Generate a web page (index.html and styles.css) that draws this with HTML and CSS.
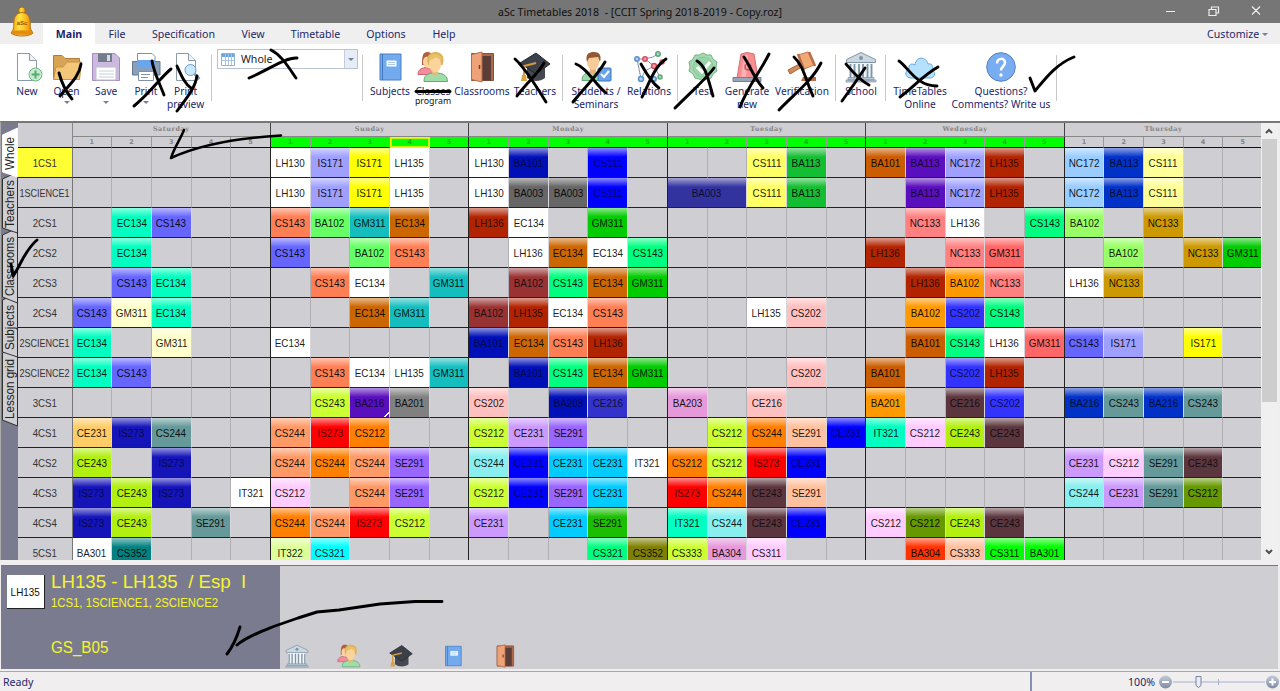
FILE: index.html
```html
<!DOCTYPE html>
<html lang="en">
<head>
<meta charset="utf-8">
<title>aSc Timetables 2018</title>
<link rel="stylesheet" href="styles.css">
</head>
<body>
<svg class="defs" width="0" height="0">
  <defs>
  <linearGradient id="gold" x1="0" x2="1"><stop offset="0" stop-color="#f39a06"/><stop offset=".4" stop-color="#ffe548"/><stop offset=".75" stop-color="#f9ab10"/><stop offset="1" stop-color="#c96d08"/></linearGradient>
  <linearGradient id="ball" x1="0" y1="0" x2="0" y2="1"><stop offset="0" stop-color="#c4cad8"/><stop offset="1" stop-color="#7e8ba5"/></linearGradient>
  </defs>
  <symbol id="new" viewBox="0 0 32 32"><path d="M6.500 2.500H18.500L25.500 9.500V29.500H6.500Z" fill="#fff" stroke="#8b9aa8"/><path d="M18.500 2.500V9.500H25.500" fill="#eef2f5" stroke="#8b9aa8"/><circle cx="24.500" cy="23.500" r="6.500" fill="#c8eccf" stroke="#6fb583"/><path d="M24.500 19.500v8M20.500 23.500h8" stroke="#58a870" stroke-width="2"/></symbol>
  <symbol id="open" viewBox="0 0 32 32"><path d="M2.500 28V4.500H11l3 3H28.500V28Z" fill="#d9a355" stroke="#b07c39"/><path d="M2.500 28.500L5 16h7l4-5h14.500L28.500 28.500Z" fill="#f3c67a" stroke="#c99349"/></symbol>
  <symbol id="save" viewBox="0 0 32 32"><path d="M2.500 2.500H25L29.500 7V29.500H2.500Z" fill="#cdb9e0" stroke="#a48cbd"/><path d="M8 2.500H22V11H8Z" fill="#727c8d"/><path d="M17 4h3v6h-3Z" fill="#d8dde5"/><path d="M6 16h20v13H6Z" fill="#fff" stroke="#b8c0cc"/><path d="M9 20h15M9 23h15M9 26h15" stroke="#c5d0da"/></symbol>
  <symbol id="print" viewBox="0 0 32 32"><path d="M7.500 12V2.500H22L25 5.500V12" fill="#fff" stroke="#8292a5"/><path d="M2.500 10.500H30V24H2.500Z" fill="#8aa0b8" stroke="#607890"/><path d="M7 9h18v8H7Z" fill="#69a6ee"/><path d="M8.500 20.500h15v9h-15Z" fill="#fff" stroke="#8292a5"/><path d="M11 23.500h9M11 26.500h7" stroke="#8292a5"/></symbol>
  <symbol id="preview" viewBox="0 0 32 32"><path d="M6.500 2.500H18.500L25.500 9.500V29.500H6.500Z" fill="#fff" stroke="#8b9aa8"/><path d="M18.500 2.500V9.500H25.500" fill="#eef2f5" stroke="#8b9aa8"/><circle cx="20.500" cy="19" r="5.500" fill="#c9e8fc" stroke="#6a9dcc"/><path d="M24.500 23l5 5" stroke="#8499ad" stroke-width="2.500"/></symbol>
  <symbol id="book" viewBox="0 0 32 32"><path d="M6 3H27V29H6Z" fill="#73a9ed" stroke="#4a7ec8"/><path d="M8.500 3V29" stroke="#3e76c0"/><path d="M12.500 9.500h10v6h-10Z" fill="#fff"/><path d="M14 11.500h7M14 13.500h7" stroke="#a9c8ee"/></symbol>
  <symbol id="people" viewBox="0 0 32 32"><path d="M1 23.500c0-5 3-6 7-7 5 1 8 2 8 7Z" fill="#f58d96" stroke="#cc6670"/><path d="M5 14C5 4 6 1 10.500 1S17 4 17 14Z" fill="#b45d3d"/><ellipse cx="10" cy="11" rx="4" ry="5.500" fill="#fad39f"/><path d="M7 30.500c0-6 3-7.500 8-8.500h6c6 1 9.500 3 9.500 8.500Z" fill="#a0dda8" stroke="#61aa73"/><path d="M15 19h6v4l-3 2-3-2Z" fill="#e8b878"/><path d="M11 14C8 4 14 1 18 1s11 2 7.500 13Z" fill="#dfb25a"/><ellipse cx="18" cy="13" rx="6" ry="8.500" fill="#fbd49c"/><path d="M12 9C12 4 15 3 18 3s7 2 7 6c-4-1-5-2-6-3-2 2-4 3-7 3Z" fill="#e8c068"/></symbol>
  <symbol id="door" viewBox="0 0 32 32"><path d="M5.500 2.500H27.500V29.500H5.500Z" fill="#aa6849" stroke="#8b5138"/><path d="M15 5H25V29.500H15Z" fill="#5b3c37"/><path d="M5.500 3.500L16 1V31L5.500 28.500Z" fill="#eea277" stroke="#b36d4d"/><path d="M13.500 14v4" stroke="#713f2e" stroke-width="1.500"/></symbol>
  <symbol id="cap" viewBox="0 0 32 32"><path d="M8 13V27c5 4 13 4 18 0V13Z" fill="#444951"/><path d="M1 12L17 2L31 13L17 23Z" fill="#3c4149" stroke="#25292e"/><path d="M17 12L5 15V27" fill="none" stroke="#d39b3b" stroke-width="2"/><path d="M3 24h4l1 6H2Z" fill="#d9a242"/></symbol>
  <symbol id="student" viewBox="0 0 32 32"><path d="M2 29.500c0-6 4-8 10-9 8 1 11 3 11 9Z" fill="#9cdbab" stroke="#65a878"/><path d="M10 17h6v5l-3 2-3-2Z" fill="#e5b077"/><ellipse cx="13" cy="11" rx="6" ry="8" fill="#f8cb96"/><path d="M7 11C5 3 9 1 14 1s8 3 6 10L18 6l-9 1Z" fill="#935831"/><rect x="18" y="17" width="13" height="13" rx="1" fill="#69a4ea" stroke="#3d77bd"/><path d="M21 23l3 3 5-6" stroke="#fff" stroke-width="2" fill="none"/></symbol>
  <symbol id="relations" viewBox="0 0 32 32"><path d="M4 8L12 8L20 6L25 3M12 8L21 15L29 13M8 28L12 20L21 15L27 26M4 8L8 28" stroke="#8795a5" fill="none"/><g stroke-width="1.500"><g fill="#a9d0ff" stroke="#5a90cc"><circle cx="4" cy="8" r="2.200"/><circle cx="8" cy="28" r="2.500"/><circle cx="21" cy="28" r="2.200"/></g><g fill="#f69ba4" stroke="#d64d60"><circle cx="12" cy="8" r="2.200"/><circle cx="21" cy="15" r="2.500"/><circle cx="29" cy="11" r="2"/></g><g fill="#a4ddb4" stroke="#5da579"><circle cx="25" cy="3" r="2.200"/><circle cx="27" cy="26" r="2"/></g></g></symbol>
  <symbol id="test" viewBox="0 0 32 32"><path d="M16 2l4 2 4 0 2 4 4 3-1 5 1 4-4 3-2 4-4 1-4 2-4-2-4-1-2-4-4-3 1-4-1-5 4-3 2-4 4 0Z" fill="#a6d9af" stroke="#72b387"/><circle cx="16" cy="16" r="10" fill="#9bd4a8" stroke="#8ac998"/><path d="M10 16l5 5 8-10" fill="none" stroke="#fff" stroke-width="3"/></symbol>
  <symbol id="siren" viewBox="0 0 32 32"><path d="M6 27L10 3Q16 0 23 3L27 27Z" fill="#f78f92" stroke="#d86e76"/><path d="M10 26L13 4h4l-2 22Z" fill="#fbb1b1"/><circle cx="17" cy="16" r="3" fill="none" stroke="#c95560" stroke-width="1.500"/><path d="M2 26.500h28v4H2Z" fill="#98a6b5" stroke="#718095"/></symbol>
  <symbol id="gavel" viewBox="0 0 32 32"><path d="M2 19L17 11l2 3L4 23Z" fill="#d18b58" stroke="#a76642"/><path d="M12 4L22 1l6 13-10 4Z" fill="#f0aa75" stroke="#c57549"/><path d="M12 3l6 16M23 1l6 14" stroke="#b96f47" stroke-width="2.500"/><path d="M17 26h13v4H15Z" fill="#b76f4b"/></symbol>
  <symbol id="school" viewBox="0 0 32 32"><path d="M1.500 8.500L16 1.500l14.500 7v3h-29Z" fill="#cbd8e2" stroke="#8294a5"/><circle cx="16" cy="7" r="2" fill="#8294a5"/><path d="M4 12h24v14H4Z" fill="#eff7fb"/><path d="M5.500 13v14M9.500 13v14M14 13v14M18 13v14M22.500 13v14M26.500 13v14" stroke="#8293a4" stroke-width="1.800"/><path d="M3 26.500h26v2.500H3ZM1 29h30v2H1Z" fill="#b8c7d4" stroke="#8293a4" stroke-width=".7"/></symbol>
  <symbol id="cloud" viewBox="0 0 32 32"><path d="M7 27C1 27 0 20 5 18 4 13 8 12 11 14 12 5 22 5 24 13c4-1 6 3 4 6 5 3 2 8-2 8Z" fill="#b5e1fd" stroke="#66a9df"/></symbol>
  <symbol id="question" viewBox="0 0 32 32"><circle cx="16" cy="16" r="14.300" fill="#79adf2" stroke="#527fc0"/><path d="M12 12.500c0-6 8-6 8-1 0 4-4 4-4 8" fill="none" stroke="#fff" stroke-width="2.500"/><circle cx="16" cy="24" r="1.700" fill="#fff"/></symbol>
</svg>

<div class="window">
  <header class="titlebar">
    <span class="title">aSc Timetables 2018&nbsp; - [CCIT Spring 2018-2019 - Copy.roz]</span>
    <svg class="window-buttons" width="110" height="20" viewBox="0 0 110 20"><path d="M6 11.500h9M49 9.500h7v6h-7ZM51.500 9.500v-2.500h7v6H56M92 6.500l8 8M100 6.500l-8 8" fill="none" stroke="#eee" stroke-width="1.200"/></svg>
  </header>

  <nav class="tabs">
    <span class="tab tab-main">Main</span><span class="tab tab-file">File</span><span class="tab tab-spec">Specification</span><span class="tab tab-view">View</span><span class="tab tab-time">Timetable</span><span class="tab tab-opt">Options</span><span class="tab tab-help">Help</span>
    <span class="customize">Customize <i class="caret"></i></span>
  </nav>
  <svg class="bell" width="28" height="32" viewBox="0 0 28 32"><circle cx="14" cy="5.500" r="3.500" fill="url(#gold)" stroke="#a66b14"/><path d="M5 25C7 20 3 9 14 7.500c11 1.500 7 12.500 9 17.500l2 3c-4 4-18 4-22 0Z" fill="url(#gold)" stroke="#b67512"/><ellipse cx="14" cy="27.500" rx="10.500" ry="2.300" fill="#e58a12"/><text x="14" y="20" text-anchor="middle">aSc</text></svg>

  <section class="ribbon">
    <div class="group g-file">
      <div class="btn"><svg><use href="#new"/></svg><b>New</b></div>
      <div class="btn"><svg><use href="#open"/></svg><b>Open</b><i class="caret"></i></div>
      <div class="btn"><svg><use href="#save"/></svg><b>Save</b><i class="caret"></i></div>
      <div class="btn"><svg><use href="#print"/></svg><b>Print</b><i class="caret"></i></div>
      <div class="btn"><svg><use href="#preview"/></svg><b>Print<br>preview</b></div>
    </div>
    <div class="group g-view">
      <div class="combo"><svg width="14" height="14" viewBox="0 0 14 14"><path d="M.5 1.500h13v12H.5Z" fill="#fff" stroke="#8fb3d8"/><path d="M1 2h12v3H1Z" fill="#69a4e0"/><path d="M4.500 2v11M7.500 2v11M10.500 2v11M1 8.500h12" stroke="#a9c4de"/></svg><span>Whole</span><em><i class="caret"></i></em></div>
    </div>
    <div class="group g-data">
      <div class="btn w44"><svg><use href="#book"/></svg><b>Subjects</b></div>
      <div class="btn w42"><svg><use href="#people"/></svg><b>Classes</b><small>program</small></div>
      <div class="btn w56"><svg><use href="#door"/></svg><b>Classrooms</b></div>
      <div class="btn w50"><svg><use href="#cap"/></svg><b>Teachers</b></div>
    </div>
    <div class="group g-rel">
      <div class="btn w56"><svg><use href="#student"/></svg><b>Students /<br>Seminars</b></div>
      <div class="btn w50"><svg><use href="#relations"/></svg><b>Relations</b></div>
    </div>
    <div class="group g-gen">
      <div class="btn w38"><svg><use href="#test"/></svg><b>Test</b></div>
      <div class="btn w50"><svg><use href="#siren"/></svg><b>Generate<br>new</b></div>
      <div class="btn w60"><svg><use href="#gavel"/></svg><b>Verification</b></div>
    </div>
    <div class="group g-school"><div class="btn w50"><svg><use href="#school"/></svg><b>School</b></div></div>
    <div class="group g-web">
      <div class="btn w64"><svg><use href="#cloud"/></svg><b>TimeTables<br>Online</b></div>
      <div class="btn w100"><svg><use href="#question"/></svg><b>Questions?<br>Comments? Write us</b></div>
    </div>
  </section>

  <main class="workspace">
    <svg class="side-tabs" width="17" height="437" viewBox="0 0 17 437">
      <g fill="#cfced3" stroke="#222" stroke-width=".9">
        <path d="M16.500 223L1.500 230V297L16.500 303Z"/>
        <path d="M16.500 170L1.500 177V229L16.500 234Z"/>
        <path d="M16.500 105L1.500 112V174L16.500 180Z"/>
        <path d="M16.500 49L1.500 56V105L16.500 110Z"/>
        <path d="M16.500 5L1.500 12V49L16.500 54Z" fill="#fff" stroke="#fff"/>
      </g>
      <g font-family="Liberation Sans" font-size="12.500" fill="#222">
        <text transform="translate(13 47) rotate(-90)" textLength="33" lengthAdjust="spacingAndGlyphs">Whole</text>
        <text transform="translate(13 105) rotate(-90)" textLength="48" lengthAdjust="spacingAndGlyphs">Teachers</text>
        <text transform="translate(13 173) rotate(-90)" textLength="59" lengthAdjust="spacingAndGlyphs">Classrooms</text>
        <text transform="translate(13 227) rotate(-90)" textLength="45" lengthAdjust="spacingAndGlyphs">Subjects</text>
        <text transform="translate(13 296) rotate(-90)" textLength="60" lengthAdjust="spacingAndGlyphs">Lesson grid</text>
      </g>
    </svg>
    <div class="board" id="board"></div>
    <div class="scrollbar">
      <svg width="14" height="16" viewBox="0 0 14 16"><path d="M4 10l3-3 3 3" fill="none" stroke="#505050" stroke-width="2"/></svg>
      <div class="thumb"></div>
      <svg width="14" height="16" viewBox="0 0 14 16"><path d="M4 6l3 3 3-3" fill="none" stroke="#505050" stroke-width="2"/></svg>
    </div>
  </main>

  <section class="details">
    <div class="card">
      <div class="chip"><span>LH135</span></div>
      <div class="info"><span class="name">LH135 - LH135&nbsp; / Esp&nbsp; I</span><span class="classes">1CS1, 1SCIENCE1, 2SCIENCE2</span><span class="room">GS_B05</span></div>
    </div>
    <div class="tools"><svg><use href="#school"/></svg><svg><use href="#people"/></svg><svg><use href="#cap"/></svg><svg><use href="#book"/></svg><svg><use href="#door"/></svg></div>
  </section>

  <footer class="status">
    <span class="ready">Ready</span>
    <div class="zoom"><span>100%</span>
      <svg width="122" height="18" viewBox="0 0 122 18"><path d="M15 9h92M60.500 6v6" stroke="#a8b0cb"/><circle cx="7.500" cy="9" r="6.500" fill="url(#ball)"/><path d="M4 9h7" stroke="#fff" stroke-width="2"/><path d="M38 3.500h5v9l-2.500 2-2.500-2Z" fill="#e9ecf4" stroke="#7784a5"/><circle cx="114.500" cy="9" r="6.500" fill="url(#ball)"/><path d="M111 9h7M114.500 5.500v7" stroke="#fff" stroke-width="2"/></svg>
    </div>
  </footer>

  <svg class="ink" width="1280" height="691" viewBox="0 0 1280 691" fill="none" stroke="#000" stroke-width="2.900" stroke-linecap="round" stroke-linejoin="round">
    <path d="M59 73C62 84 66 92 72 99M81 64C79 77 70 84 60 96"/>
    <path d="M152 61C154 73 160 84 164 95M171 69C161 77 150 93 134 106"/>
    <path d="M177 66C182 77 185 84 191 88M197 76C195 89 185 100 177 111"/>
    <path d="M271 50C281 55 287 65 296 78M297 58C286 57 270 69 249 78"/>
    <path d="M416 91.500H450"/>
    <path d="M515 59C525 68 535 84 546 102M544 63C538 74 527 82 517 96"/>
    <path d="M576 64C587 68 594 83 606 93M605 62C597 76 586 86 573 102"/>
    <path d="M641 64C646 73 652 83 659 88M666 59C654 67 650 82 642 97"/>
    <path d="M697 61C706 66 708 79 713 96M714 68C706 79 695 88 675 108"/>
    <path d="M744 57C750 66 754 78 763 88M769 54C760 72 748 86 740 107"/>
    <path d="M794 57C804 66 806 82 813 96M821 63C812 81 794 94 779 110"/>
    <path d="M846 64C851 70 859 80 869 85M865 68C857 80 850 90 842 101"/>
    <path d="M899 61C908 67 916 86 937 86M938 67C922 76 914 87 900 97"/>
    <path d="M1030 78L1035 91C1045 79 1056 64 1074 57"/>
    <path d="M184 130C180 140 174 148 171 158C199 145 239 138 281 135.500" stroke-width="2.500"/>
    <path d="M11 264L13 276C20 267 24 251 37 240"/>
    <path d="M240 627C237 637 234 645 227 654M237 645C246 637 260 632 275 626L298 618L317 612L339 610L380 604L415 601.500H442"/>
  </svg>
</div>
<script src="board.js"></script>
</body>
</html>
```
FILE: styles.css
```css
* { box-sizing: border-box; }
body { margin: 0; overflow: hidden; font-family: "Noto Sans", "Open Sans", sans-serif; font-size: 11px; color: #23266b; }
.defs { position: absolute; }
.window { position: relative; display: flex; flex-direction: column; width: 1280px; height: 691px; background: #f0eeee; }
.titlebar { display: flex; height: 23px; flex: none; align-items: center; justify-content: center; background: #767676; color: #111; position: relative; }
.title { font-size: 10.6px; white-space: nowrap; }
.window-buttons { position: absolute; right: 10px; top: 0; }
.tabs { display: flex; height: 21px; flex: none; padding-left: 43px; background: #efefef; line-height: 23px; font-size: 10.6px; }
.tab { text-align: center; white-space: nowrap; }
.tab-main { width: 52px; background: #fff; font-weight: bold; }
.tab-file { width: 44px; }
.tab-spec { width: 89px; }
.tab-view { width: 50px; }
.tab-time { width: 75px; }
.tab-opt { width: 66px; }
.tab-help { width: 50px; }
.customize { margin-left: auto; padding-right: 12px; }
.caret { display: inline-block; width: 0; height: 0; border: 3px solid transparent; border-top-color: #718299; border-bottom: 0; vertical-align: 2px; }
.bell { position: absolute; left: 8px; top: 5px; }
.bell text { font: bold 6px "Liberation Sans", sans-serif; fill: #8a5108; }
.ribbon { display: flex; height: 77px; flex: none; background: #fff; padding-top: 7px; }
.group { display: flex; flex: none; height: 70px; background: linear-gradient(#c9c9c9, #c9c9c9) right 4px / 1px 46px no-repeat; }
.btn { display: flex; flex: none; flex-direction: column; align-items: center; width: 39.7px; white-space: nowrap; font-size: 10.2px; }
.btn > svg { width: 32px; height: 32px; margin-bottom: 2px; flex: none; }
.btn b { font-weight: normal; line-height: 12.5px; text-align: center; display: block; }
.btn .caret { margin-top: 3px; }
.btn small { display: block; font-size: 8.8px; line-height: 7px; color: #111; }
.g-file { width: 212px; padding-left: 7px; }
.g-view { width: 151px; padding-left: 5px; }
.g-data { width: 200px; padding-left: 5px; }
.g-rel { width: 115px; padding-left: 5px; }
.g-gen { width: 158px; padding-left: 6px; }
.g-school { width: 50px; }
.g-web { width: 171px; padding-left: 2px; }
.w38 { width: 38px; }
.w42 { width: 42px; }
.w44 { width: 44px; }
.w50 { width: 50px; }
.w56 { width: 56px; }
.w60 { width: 60px; }
.w64 { width: 64px; }
.w100 { width: 98px; }
.combo { display: flex; align-items: center; width: 141px; height: 20px; margin-top: -2px; padding-left: 3px; border: 1px solid #b9c2d3; background: #fff; color: #222; }
.combo span { margin-left: 6px; font-size: 10.6px; }
.combo em { display: flex; align-items: center; justify-content: center; margin-left: auto; width: 13px; height: 18px; background: #e7edf6; border-left: 1px solid #c4cddd; }
.workspace { display: flex; height: 439px; flex: none; border-top: 2px solid #777; border-left: 1px solid #aaa; padding-right: 2px; }
.side-tabs { flex: none; background: #7b7b90; }
.board { width: 1243px; flex: none; overflow: hidden; background: #cfced3; font-family: "Liberation Sans", Arial, sans-serif; font-size: 11px; color: #111; display: grid; grid-template-columns: 54.5px repeat(30, 39.7px); grid-template-rows: 14px 11px; grid-auto-rows: 30px; }
.corner { grid-row: span 2; border-bottom: 1px solid #111; border-right: 1px solid #888; }
.day { grid-column: span 5; border-right: 1.5px solid #444; border-bottom: 1px solid #888; font: bold 6.5px/13px "DejaVu Serif", serif; letter-spacing: .5px; text-align: center; color: #858585; }
.hour { border-right: 1px solid #999; border-bottom: 1px solid #111; font: bold 6.5px/11px "DejaVu Sans", sans-serif; text-align: center; color: #858585; }
.hour.on { background: #00ff00; color: #13b513; }
.hour.active { border: 1px solid #fff200; box-shadow: inset 0 0 0 1px #ccee00; line-height: 8px; }
.cell, .label { display: flex; align-items: center; justify-content: center; border-bottom: 1.5px solid #222; border-right: 1px solid #b0afb5; overflow: hidden; white-space: nowrap; }
.label { border-right-color: #777; color: #333; }
.label.selected { background: #ffff33; }
.cell span, .chip span { transform: scaleX(.9); flex: none; }
.label span { transform: scaleX(.88); flex: none; }
.label.long span { transform: scaleX(.82); }
.cell.filled { background-image: linear-gradient(rgba(255,255,255,.55), rgba(255,255,255,0) 9px); border-right-color: #d6d6dc; }
.cell.double { grid-column: span 2; }
.cell.day-end, .hour.day-end { border-right: 1.5px solid #222; }
.cell.folded { background-image: linear-gradient(135deg, transparent 92%, #fff 92%, #fff 95%, transparent 95%), linear-gradient(rgba(255,255,255,.55), rgba(255,255,255,0) 9px); }
.scrollbar { display: flex; flex-direction: column; width: 17px; background: #f0f0f0; padding-left: 1px; }
.thumb { width: 15px; height: 263px; margin-bottom: auto; background: #cdcdcd; }
.details { display: flex; flex: none; height: 104px; margin: 5px 2px 0 1px; border-top: 1px solid #777; background: #cfced3; }
.card { display: flex; width: 279px; background: #7b7b90; font-family: "Liberation Sans", Arial, sans-serif; color: #f5f52d; }
.chip { display: flex; align-items: center; justify-content: center; width: 38px; height: 34px; margin: 9px 0 0 6px; background: #fff; border-right: 1px solid #222; border-bottom: 1px solid #222; font-size: 11px; color: #111; }
.info { display: flex; flex-direction: column; margin-left: 6px; white-space: nowrap; }
.info span { transform-origin: left; }
.name { font-size: 18.7px; line-height: 20px; margin-top: 6px; }
.classes { font-size: 12px; line-height: 14px; margin-top: 4px; transform: scaleX(.945); }
.room { font-size: 15.8px; line-height: 18px; margin-top: 29px; transform: scaleX(.96); }
.tools { display: flex; gap: 28px; align-items: flex-end; padding: 0 0 1px 5px; }
.tools svg { width: 24px; height: 24px; }
.status { display: flex; flex: 1; align-items: center; justify-content: space-between; margin-top: 2px; border-top: 1px solid #a2a8bb; padding: 0 0 0 3px; font-size: 10.6px; }
.zoom { display: flex; align-items: center; height: 100%; width: 250px; border-left: 2px solid #8490af; justify-content: flex-end; }
.zoom span { margin-right: 3px; }
.ink { position: absolute; left: 0; top: 0; pointer-events: none; }
```
FILE: board.js
```js
const palette = {
  w: '#ffffff', V: '#9f9fff', Y: '#ffff00', n: '#0010b8', b: '#0000ff', y: '#ffff66',
  g: '#14be32', o: '#cc5c00', p: '#5a0fbe', r: '#b22400', L: '#99ccff', B: '#0032c8',
  Q: '#ffff99', G: '#666666', i: '#3333a0', t: '#00ffc0', c: '#6666ff', s: '#ff7f55',
  m: '#66ff66', T: '#14bebe', O: '#cc6600', e: '#00cc00', k: '#ff8080', S: '#00ff80',
  M: '#99ff66', d: '#cc9900', R: '#ff6666', N: '#993333', x: '#ffffcc', a: '#ff9900',
  u: '#3333ff', f: '#ffc0c0', l: '#ccff33', h: '#808080', U: '#3333cc', P: '#e699d9',
  D: '#5c363e', E: '#669999', C: '#ffcc66', I: '#1414b9', A: '#ff9966', F: '#ff0000',
  H: '#ff8000', j: '#cc99ff', J: '#9966ff', K: '#ffc19f', q: '#ffccff', v: '#b2f010',
  W: '#88eeee', X: '#00ccff', z: '#669900', Z: '#008080', 1: '#ddff99', 2: '#00ffff',
  3: '#808000', 4: '#ff3300', 5: '#00ff00', 6: '#1abf00'
};

// Each lesson is "slot code colour"; slots run from 0 (Saturday 1) to 29 (Thursday 5).
const rows = [
  ['1CS1', '5 LH130 w,6 IS171 V,7 IS171 Y,8 LH135 w,10 LH130 w,11 BA101 n,13 CS111 b,17 CS111 y,18 BA113 g,20 BA101 o,21 BA113 p,22 NC172 V,23 LH135 r,25 NC172 L,26 BA113 B,27 CS111 Q'],
  ['1SCIENCE1', '5 LH130 w,6 IS171 V,7 IS171 Y,8 LH135 w,10 LH130 w,11 BA003 G,12 BA003 G,13 CS111 b,15 BA003 i 2,17 CS111 y,18 BA113 g,21 BA113 p,22 NC172 V,23 LH135 r,25 NC172 L,26 BA113 B,27 CS111 Q'],
  ['2CS1', '1 EC134 t,2 CS143 c,5 CS143 s,6 BA102 m,7 GM311 T,8 EC134 O,10 LH136 r,11 EC134 w,13 GM311 e,21 NC133 k,22 LH136 w,24 CS143 S,25 BA102 M,27 NC133 d'],
  ['2CS2', '1 EC134 t,5 CS143 c,7 BA102 m,8 CS143 s,11 LH136 w,12 EC134 O,13 EC134 w,14 CS143 S,20 LH136 r,22 NC133 k,23 GM311 R,26 BA102 M,28 NC133 d,29 GM311 e'],
  ['2CS3', '1 CS143 c,2 EC134 t,6 CS143 s,7 EC134 w,9 GM311 T,11 BA102 N,12 CS143 S,13 EC134 O,14 GM311 e,21 LH136 r,22 BA102 a,23 NC133 k,25 LH136 w,26 NC133 d'],
  ['2CS4', '0 CS143 c,1 GM311 x,2 EC134 t,7 EC134 O,8 GM311 T,10 BA102 N,11 LH135 r,12 EC134 w,13 CS143 s,17 LH135 w,18 CS202 f,21 BA102 a,22 CS202 u,23 CS143 S'],
  ['2SCIENCE1', '0 EC134 t,2 GM311 x,5 EC134 w,10 BA101 n,11 EC134 O,12 CS143 s,13 LH136 r,21 BA101 o,22 CS143 S,23 LH136 w,24 GM311 R,25 CS143 c,26 IS171 V,28 IS171 Y'],
  ['2SCIENCE2', '0 EC134 t,1 CS143 c,6 CS143 s,7 EC134 w,8 LH135 w,9 GM311 T,11 BA101 n,12 CS143 S,13 EC134 O,14 GM311 e,18 CS202 f,20 BA101 o,22 CS202 u,23 LH135 r'],
  ['3CS1', '6 CS243 l,7 BA216 p,8 BA201 h,10 CS202 f,12 BA203 n,13 CE216 U,15 BA203 P,17 CE216 f,20 BA201 a,22 CE216 D,23 CS202 u,25 BA216 B,26 CS243 E,27 BA216 B,28 CS243 E'],
  ['4CS1', '0 CE231 C,1 IS273 I,2 CS244 E,5 CS244 A,6 IS273 F,7 CS212 H,10 CS212 l,11 CE231 j,12 SE291 J,16 CS212 l,17 CS244 H,18 SE291 K,19 CE231 b,20 IT321 t,21 CS212 q,22 CE243 v,23 CE243 D'],
  ['4CS2', '0 CE243 v,2 IS273 I,5 CS244 A,6 CS244 H,7 CS244 A,8 SE291 J,10 CS244 W,11 CE231 b,12 CE231 X,13 CE231 X,14 IT321 w,15 CS212 H,16 CS212 l,17 IS273 F,18 CE231 b,25 CE231 j,26 CS212 q,27 SE291 E,28 CE243 D'],
  ['4CS3', '0 IS273 I,1 CE243 v,2 IS273 I,4 IT321 w,5 CS212 q,7 CS244 A,8 SE291 J,10 CS212 l,11 CE231 b,12 SE291 J,13 CE231 X,15 IS273 F,16 CS244 H,17 CE243 D,18 SE291 K,25 CS244 W,26 CE231 j,27 SE291 E,28 CS212 z'],
  ['4CS4', '0 IS273 I,1 CE243 v,3 SE291 E,5 CS244 H,6 CS244 A,7 IS273 F,8 CS212 l,10 CE231 j,12 CE231 X,13 SE291 6,15 IT321 t,16 CS244 W,17 CE243 D,18 CE231 b,20 CS212 q,21 CS212 z,22 CE243 v,23 CE243 D'],
  ['5CS1', '0 BA301 w,1 CS352 Z,5 IT322 1,6 CS321 2,13 CS321 S,14 CS352 3,15 CS333 l,16 BA304 P,17 CS311 q,21 BA304 4,22 CS333 K,23 CS311 5,24 BA301 5']
];

const board = document.getElementById('board');

function add(className, text, color) {
  const el = document.createElement('div');
  el.className = className;
  if (text) {
    const span = document.createElement('span');
    span.textContent = text;
    el.append(span);
  }
  if (color) {
    el.style.backgroundColor = color;
    const [r, g, b] = [1, 3, 5].map(i => parseInt(color.slice(i, i + 2), 16));
    const light = (r * 3 + g * 6 + b) / 2550;
    el.style.color = `rgba(0,0,0,${light < 0.15 ? 0.6 : light < 0.35 ? 0.75 : 0.9})`;
  }
  board.append(el);
}

add('corner');
['Saturday', 'Sunday', 'Monday', 'Tuesday', 'Wednesday', 'Thursday'].forEach(day => add('day', day));
for (let slot = 0; slot < 30; slot++) {
  add('hour' + (slot > 4 && slot < 25 ? ' on' : '') + (slot === 8 ? ' active' : '') + (slot % 5 === 4 ? ' day-end' : ''), String(slot % 5 + 1));
}
rows.forEach(([name, list], index) => {
  add('label' + (index === 0 ? ' selected' : '') + (name.length > 6 ? ' long' : ''), name);
  const lessons = new Map(list.split(',').map(item => {
    const [slot, code, key, span] = item.split(' ');
    return [Number(slot), { code, key, span: Number(span || 1) }];
  }));
  for (let slot = 0; slot < 30; slot++) {
    const end = slot % 5 === 4 ? ' day-end' : '';
    const lesson = lessons.get(slot);
    if (!lesson) { add('cell' + end); continue; }
    const folded = index === 8 && slot === 7 ? ' folded' : '';
    add('cell filled' + end + folded + (lesson.span === 2 ? ' double' : ''), lesson.code, palette[lesson.key]);
    slot += lesson.span - 1;
  }
});
```
